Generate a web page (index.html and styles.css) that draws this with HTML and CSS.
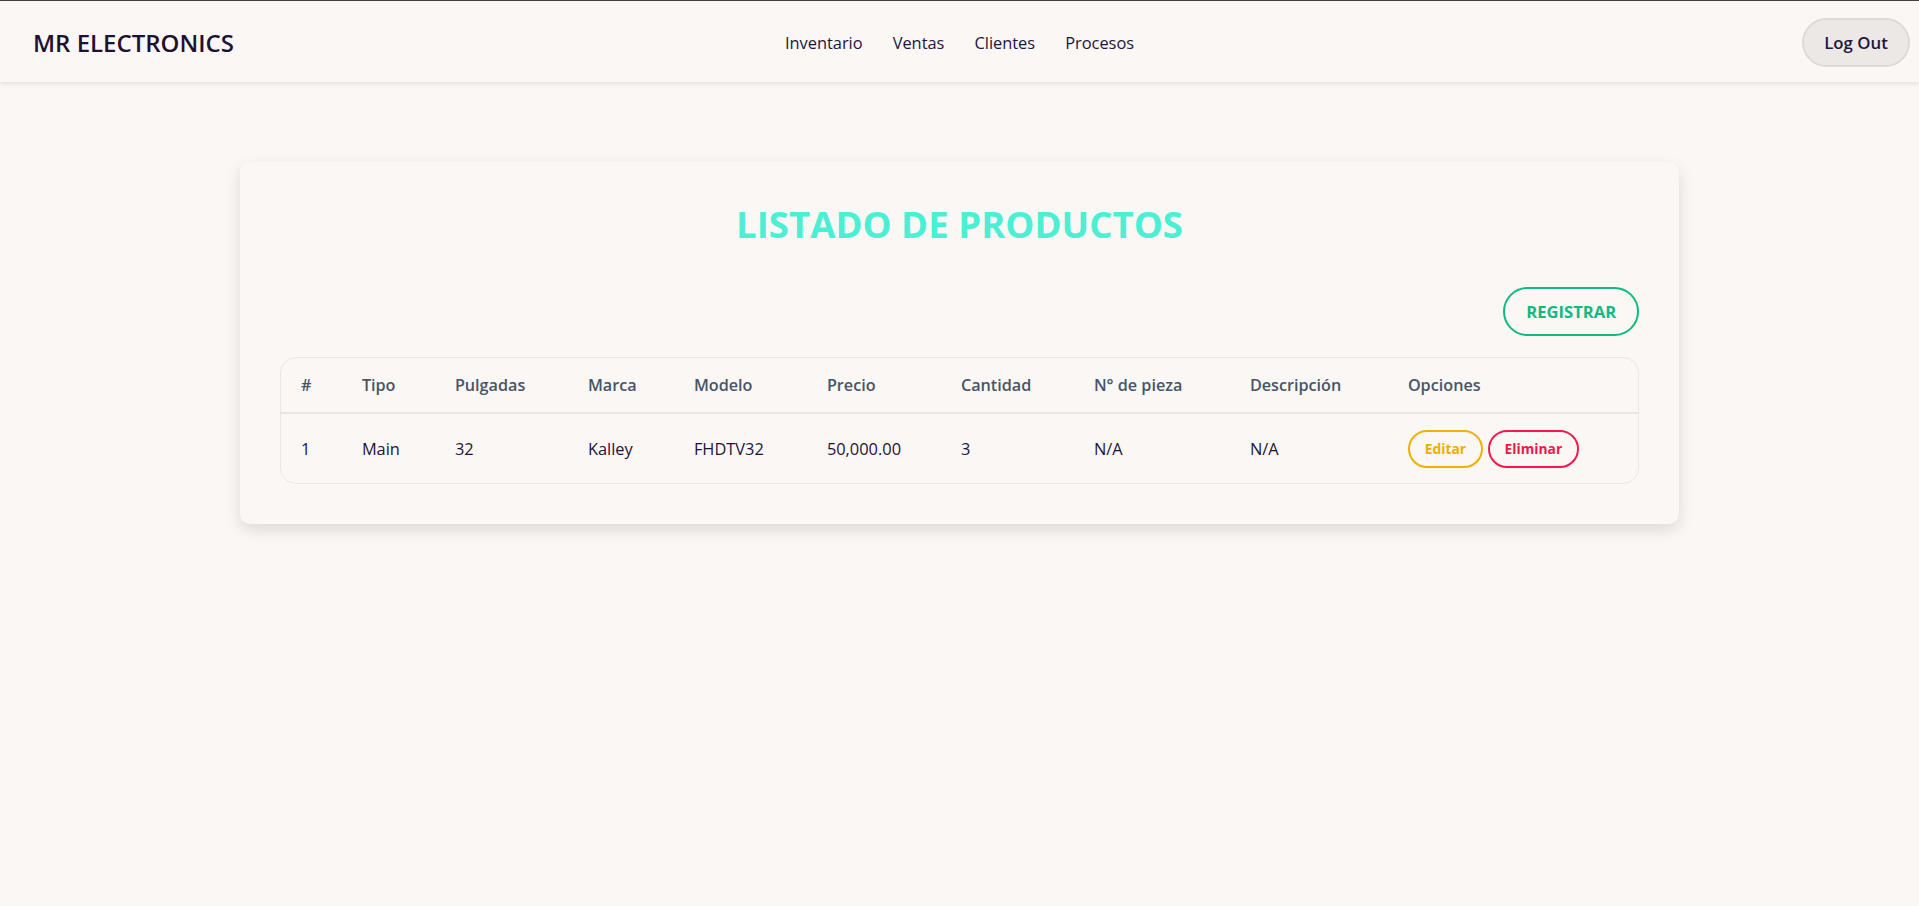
FILE: index.html
```html
<!DOCTYPE html>
<html lang="es">
<head>
<meta charset="utf-8">
<title>MR Electronics - Inventario</title>
<link rel="stylesheet" href="styles.css">
</head>
<body>
<header class="topbar">
  <div class="brand">MR ELECTRONICS</div>
  <nav class="nav">
    <a href="#" class="nav-link">Inventario</a>
    <a href="#" class="nav-link">Ventas</a>
    <a href="#" class="nav-link">Clientes</a>
    <a href="#" class="nav-link">Procesos</a>
  </nav>
  <div class="actions">
    <button class="logout">Log Out</button>
  </div>
</header>

<main class="main">
  <section class="card">
    <h1 class="title">LISTADO DE PRODUCTOS</h1>
    <div class="toolbar">
      <button class="btn-register">REGISTRAR</button>
    </div>
    <div class="table-wrap">
      <table class="table">
        <colgroup>
          <col class="c-num">
          <col class="c-tipo">
          <col class="c-pulg">
          <col class="c-marca">
          <col class="c-modelo">
          <col class="c-precio">
          <col class="c-cant">
          <col class="c-pieza">
          <col class="c-desc">
          <col>
        </colgroup>
        <thead>
          <tr>
            <th>#</th>
            <th>Tipo</th>
            <th>Pulgadas</th>
            <th>Marca</th>
            <th>Modelo</th>
            <th>Precio</th>
            <th>Cantidad</th>
            <th>N° de pieza</th>
            <th>Descripción</th>
            <th>Opciones</th>
          </tr>
        </thead>
        <tbody>
          <tr>
            <td>1</td>
            <td>Main</td>
            <td>32</td>
            <td>Kalley</td>
            <td>FHDTV32</td>
            <td>50,000.00</td>
            <td>3</td>
            <td>N/A</td>
            <td>N/A</td>
            <td>
              <div class="opts">
                <button class="btn-sm btn-edit">Editar</button>
                <button class="btn-sm btn-del">Eliminar</button>
              </div>
            </td>
          </tr>
        </tbody>
      </table>
    </div>
  </section>
</main>
</body>
</html>
```

FILE: styles.css
```css
* {
  box-sizing: border-box;
}

html, body {
  margin: 0;
  padding: 0;
}

body {
  background: #faf7f4;
  font-family: "Open Sans", "Noto Sans", sans-serif;
  color: #1e1338;
  min-height: 906px;
}

.topbar {
  height: 82px;
  border-top: 1px solid #4a4040;
  background: #faf7f4;
  box-shadow: 0 2px 4px rgba(0, 0, 0, 0.09);
  display: grid;
  grid-template-columns: 1fr auto 1fr;
  align-items: center;
  padding: 1px 9px 0;
  position: relative;
  z-index: 1;
}

.brand {
  margin-left: 24px;
  font-size: 24px;
  font-weight: 600;
  color: #1f1133;
}

.nav {
  display: flex;
  gap: 30px;
}

.nav-link {
  font-size: 16.4px;
  color: #221640;
  text-decoration: none;
}

.actions {
  display: flex;
  justify-content: flex-end;
}

.logout {
  width: 108px;
  height: 49px;
  border-radius: 999px;
  background: #ece8e5;
  border: 2px solid #dfdad7;
  font-family: inherit;
  font-size: 16.8px;
  font-weight: 600;
  color: #221640;
  padding: 0;
}

.main {
  padding-top: 80px;
}

.card {
  width: 75%;
  margin: 0 auto;
  background: #faf7f4;
  border-radius: 10px;
  padding: 38px 40px 40px;
  box-shadow: 0 6px 16px rgba(0, 0, 0, 0.12);
}

.title {
  margin: 0;
  text-align: center;
  font-size: 36.6px;
  line-height: 48px;
  font-weight: 700;
  color: #4aefd4;
}

.toolbar {
  display: flex;
  justify-content: flex-end;
  margin-top: 39px;
}

.btn-register {
  height: 49px;
  padding: 0 21px;
  border-radius: 999px;
  border: 2px solid #10b981;
  background: transparent;
  color: #10b981;
  font-family: inherit;
  font-size: 16.6px;
  font-weight: 700;
}

.table-wrap {
  margin-top: 21px;
  border: 1px solid #ebe6e3;
  border-radius: 16px;
  overflow: hidden;
}

.table {
  width: 100%;
  border-collapse: collapse;
  table-layout: fixed;
}

.c-num { width: 61px; }
.c-tipo { width: 93px; }
.c-pulg { width: 133px; }
.c-marca { width: 106px; }
.c-modelo { width: 133px; }
.c-precio { width: 134px; }
.c-cant { width: 133px; }
.c-pieza { width: 156px; }
.c-desc { width: 158px; }

.table th {
  text-align: left;
  font-size: 16.2px;
  font-weight: 600;
  color: #475569;
  height: 55px;
  padding: 0 20px;
  border-bottom: 2px solid #ebe6e3;
}

.table td {
  font-size: 16.4px;
  color: #1e1338;
  height: 70px;
  padding: 0 20px;
  vertical-align: middle;
}

.opts {
  display: flex;
  gap: 5px;
}

.btn-sm {
  height: 38px;
  border-radius: 999px;
  background: transparent;
  font-family: inherit;
  font-size: 13.8px;
  font-weight: 700;
  padding: 0;
}

.btn-edit {
  width: 75px;
  border: 2px solid #f0b000;
  color: #f0ad00;
}

.btn-del {
  width: 91px;
  border: 2px solid #f5194f;
  color: #f0174e;
}
```
